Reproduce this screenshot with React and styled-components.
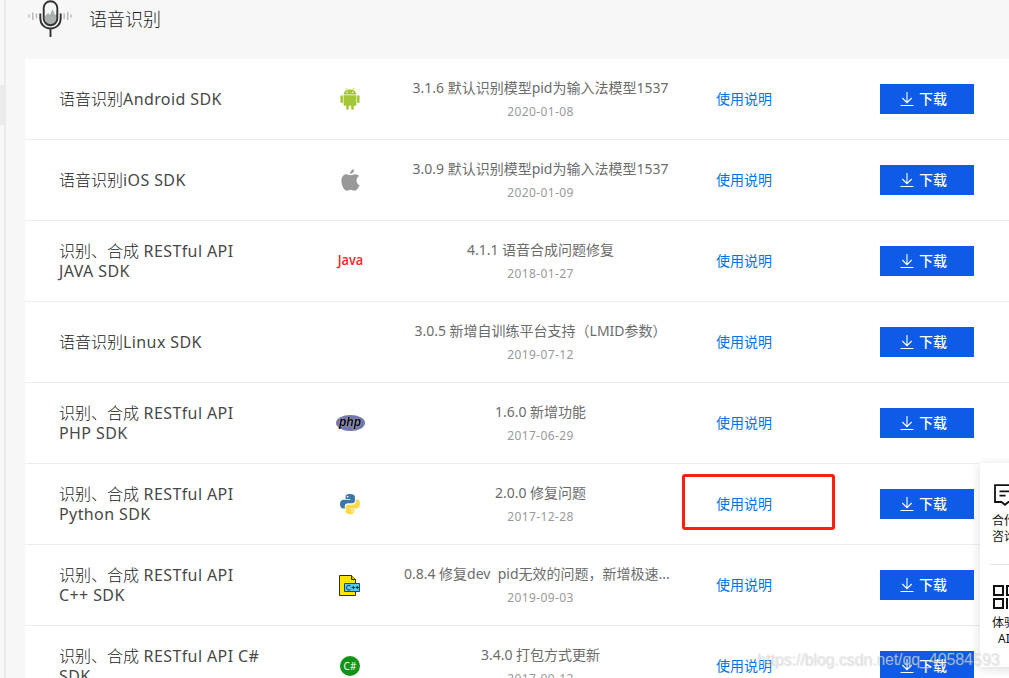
import styled, { createGlobalStyle } from 'styled-components';

const rows = [
  { prefix: '语音识别', name: 'Android SDK', icon: 'android', info: '3.1.6 默认识别模型pid为输入法模型1537', date: '2020-01-08' },
  { prefix: '语音识别', name: 'iOS SDK', icon: 'apple', info: '3.0.9 默认识别模型pid为输入法模型1537', date: '2020-01-09' },
  { prefix: '识别、合成', name: ' RESTful API JAVA SDK', icon: 'java', info: '4.1.1 语音合成问题修复', date: '2018-01-27' },
  { prefix: '语音识别', name: 'Linux SDK', info: '3.0.5 新增自训练平台支持（LMID参数）', date: '2019-07-12' },
  { prefix: '识别、合成', name: ' RESTful API PHP SDK', icon: 'php', info: '1.6.0 新增功能', date: '2017-06-29' },
  { prefix: '识别、合成', name: ' RESTful API Python SDK', icon: 'python', info: '2.0.0 修复问题', date: '2017-12-28', marked: true },
  { prefix: '识别、合成', name: ' RESTful API C++ SDK', icon: 'cpp', info: '0.8.4 修复dev\u00a0\u00a0pid无效的问题，新增极速...\u00a0\u00a0', date: '2019-09-03' },
  { prefix: '识别、合成', name: ' RESTful API C# SDK', icon: 'csharp', info: '3.4.0 打包方式更新', date: '2017-09-12' },
];

const AndroidIcon = () => (
  <svg width="20" height="22" viewBox="0 0 20 22" fill="#a4c639">
    <path d="M3.6 6.6C3.7 4.4 5 3 6.9 2.1L5.8.4l.5-.3 1.2 1.8c1.6-.5 3.4-.5 5 0L13.7.1l.5.3-1.1 1.7c1.9.9 3.2 2.3 3.3 4.5z" />
    <circle cx="7.2" cy="4.3" r=".7" fill="#fff" />
    <circle cx="12.8" cy="4.3" r=".7" fill="#fff" />
    <path d="M3.6 7.3h12.8v9.2c0 .8-.6 1.3-1.3 1.3h-1.3v2.7c0 1.9-2.6 1.9-2.6 0v-2.7H8.8v2.7c0 1.9-2.6 1.9-2.6 0v-2.7H4.9c-.7 0-1.3-.5-1.3-1.3z" />
    <rect x=".4" y="7.2" width="2.6" height="7.8" rx="1.3" />
    <rect x="17" y="7.2" width="2.6" height="7.8" rx="1.3" />
  </svg>
);

const AppleIcon = () => (
  <svg width="19" height="22" viewBox="0 0 19 22" fill="#999">
    <path d="M15.5 11.6c0-2.3 1.1-3.5 2.6-4.5-1-1.4-2.5-1.9-4.2-1.9-1.8 0-2.8 1-4.2 1-1.3 0-2.5-1-4.2-1C2.6 5.2.4 7.7.4 12c0 4.4 2.8 9.7 5.3 9.7 1.4 0 2.3-1 4.1-1 1.8 0 2.4 1 4 1 2 0 3.8-3 4.7-5.4-2-.9-3-2.5-3-4.7zM13.1.2c.3 2.4-1.6 4.7-4 4.7C8.9 2.6 10.7.5 13.1.2z" />
  </svg>
);

const PythonIcon = () => (
  <svg width="22" height="22" viewBox="0 0 22 22">
    <path fill="#3b77a8" d="M10.9 1C7 1 6.6 2.7 6.6 3.7v2.2h4.7v.8H4.5C2.4 6.7 1 8.3 1 11.1c0 2.9 1.3 4.5 3.1 4.5h1.7v-2.4c0-1.7 1.4-3 3.1-3h4.5c1.4 0 2.5-1.1 2.5-2.5v-4C15.9 1.8 13.9 1 10.9 1z" />
    <path fill="#ffd84a" d="M11.1 21.2c3.9 0 4.3-1.7 4.3-2.7v-2.2h-4.7v-.8h6.8c2.1 0 3.5-1.6 3.5-4.4 0-2.9-1.3-4.5-3.1-4.5h-1.2v2.2c0 1.7-1.4 3-3.1 3H9.1c-1.4 0-2.5 1.1-2.5 2.5v4.2c0 1.9 1.5 2.7 4.5 2.7z" />
    <circle cx="8.6" cy="3.6" r=".9" fill="#fff" />
    <circle cx="13.4" cy="18.6" r=".9" fill="#fff" />
  </svg>
);

const CppIcon = () => (
  <svg width="22" height="24" viewBox="0 -2 22 24">
    <path d="M.5.5h12l4 4v16H.5z" fill="#ffe500" stroke="#332e12" />
    <path d="M12.5.5v4h4" fill="#d8c200" stroke="#332e12" />
    <path d="M5.5 8.500h15v8h-15z" fill="#5cc8f4" stroke="#1d4a66" />
    <path d="M11.5 10.900c-2-1.300-4-.3-4 1.800s2 3.100 4 1.800M12.500 12.500h3.500M14.300 10.800V14.300M16.500 12.500h3.500M18.300 10.800V14.300" fill="none" stroke="#14384d" />
  </svg>
);

const MicIcon = () => (
  <svg width="46" height="40" viewBox="0 0 46 40" fill="none">
    <path d="M17 16l3-3 2 2 2.500-6 2.500 6 2-1v7c0 5.500-12 5.500-12 0z" fill="#aab0b2" />
    <rect x="15.700" y="1.200" width="13.600" height="24" rx="6.800" stroke="#333" strokeWidth="1.900" />
    <path d="M12.300 13.500V18c0 6.500 4.300 10.500 10.200 10.500S32.700 24.500 32.700 18v-4.500M22.500 28.500V37" stroke="#333" strokeWidth="1.900" />
    <path d="M1 14.500v3M4.700 12.500v7.500M8.500 13.500v5M36.200 13.500v5.500M39.700 12V20M43 14.500v3" stroke="#b4b9ba" strokeWidth="1.400" />
  </svg>
);

const DownloadIcon = () => (
  <svg width="14" height="16" viewBox="0 0 14 16" fill="none" stroke="#fff" strokeWidth="1.1">
    <path d="M7 1v10.500M2.300 7L7 11.700 11.700 7M.5 14.500h13" />
  </svg>
);

const ChatIcon = () => (
  <svg width="22" height="22" viewBox="0 0 22 22" fill="none" stroke="#111" strokeWidth="1.8">
    <path d="M1 1.200h20V18h-6.500L11 20.800 7.500 18H1zM5.500 7.300h11M5.500 11.700h6" />
  </svg>
);

const CodeIcon = () => (
  <svg width="24" height="24" viewBox="0 0 24 24" fill="none" stroke="#111" strokeWidth="2">
    <path d="M1 1h9v9H1zM14 1h9v9h-9zM1 14h9v9H1zM14 13v11M18 14h5v5M18 23h5" />
  </svg>
);

const platformIcons = {
  android: <AndroidIcon />,
  apple: <AppleIcon />,
  python: <PythonIcon />,
  cpp: <CppIcon />,
};

const PlatformIcon = ({ type }) => {
  if (type === 'java') return <JavaMark>Java</JavaMark>;
  if (type === 'php') return <PhpMark>php</PhpMark>;
  if (type === 'csharp') return <CsharpMark>C#</CsharpMark>;
  return platformIcons[type] || null;
};

const App = () => {
  return (
    <>
      <GlobalStyle />
      <Page>
        <SideEdge>
          <SideActive />
        </SideEdge>
        <Main>
          <Header>
            <MicIcon />
            <Title>语音识别</Title>
          </Header>
          <List>
            {rows.map(({ prefix, name, icon, info, date, marked }) => (
              <Row key={name}>
                <Name>
                  {prefix}
                  <span>{name}</span>
                </Name>
                <IconCell>
                  <PlatformIcon type={icon} />
                </IconCell>
                <Details>
                  <Info>{info}</Info>
                  <ReleaseDate>{date}</ReleaseDate>
                </Details>
                <LinkCell>
                  <DocLink href="#">使用说明</DocLink>
                  {marked && <Marker />}
                </LinkCell>
                <DownloadButton type="button">
                  <DownloadIcon />
                  下载
                </DownloadButton>
              </Row>
            ))}
          </List>
        </Main>
        <FloatPanel>
          <FloatItem>
            <ChatIcon />
            <FloatText $top={7}>
              合作
              <br />
              咨询
            </FloatText>
          </FloatItem>
          <FloatDivider />
          <FloatItem>
            <CodeIcon />
            <FloatText $top={6}>
              体验
              <br />
              AI
            </FloatText>
          </FloatItem>
        </FloatPanel>
        <Watermark>https://blog.csdn.net/qq_40584593</Watermark>
      </Page>
    </>
  );
};

const GlobalStyle = createGlobalStyle`
  * {
    box-sizing: border-box;
  }

  body {
    margin: 0;
    overflow: hidden;
    font-family: 'Noto Sans', 'Noto Sans CJK SC', sans-serif;
  }
`;

const Page = styled.div`
  position: relative;
  display: flex;
  width: 1009px;
  height: 678px;
  overflow: hidden;
  background: #f7f7f7;
`;

const SideEdge = styled.div`
  flex: none;
  width: 6px;
  padding-top: 85px;
  border-right: 2px solid #ebebeb;
`;

const SideActive = styled.div`
  height: 40px;
  background: #ebebeb;
`;

const Main = styled.main`
  flex: 1;
  padding-left: 19px;
`;

const Header = styled.header`
  display: flex;
  height: 59px;
  padding-left: 3px;
`;

const Title = styled.h1`
  margin: 0 0 0 15px;
  color: #222;
  font-size: 18px;
  font-weight: 300;
  line-height: 38px;
`;

const List = styled.div`
  background: #fff;
`;

const Row = styled.div`
  display: grid;
  grid-template-columns: 241px 100px 281px 126px 94px;
  align-items: center;
  height: 81px;
  padding-left: 34px;
  border-bottom: 1px solid #ededed;
`;

const Name = styled.div`
  width: 203px;
  color: #222;
  font-size: 16px;
  font-weight: 300;
  line-height: 20px;

  span {
    color: #484848;
    font-weight: 400;
    letter-spacing: 0.4px;
  }
`;

const IconCell = styled.div`
  display: flex;
  justify-content: center;
`;

const JavaMark = styled.span`
  margin-top: -2px;
  color: #f52222;
  font-family: 'Open Sans', sans-serif;
  font-size: 14.5px;
  font-weight: 600;
  line-height: 20px;
  transform: scaleX(0.88);
`;

const PhpMark = styled.span`
  width: 29px;
  height: 16px;
  border-radius: 50%;
  background: #7377ad;
  color: #000;
  font: italic bold 12px/14px 'Liberation Sans', sans-serif;
  text-align: center;
  text-shadow: 0 0 1px #fff;
`;

const CsharpMark = styled.span`
  width: 20px;
  height: 20px;
  border-radius: 50%;
  background: #0f9415;
  color: #fff;
  font-size: 10px;
  font-weight: 400;
  line-height: 20px;
  text-align: center;
`;

const Details = styled.div`
  text-align: center;
`;

const Info = styled.div`
  color: #6c6c6c;
  font-size: 14px;
  font-weight: 400;
  line-height: 24px;
  white-space: nowrap;
`;

const ReleaseDate = styled.div`
  margin-bottom: -1px;
  padding-top: 1px;
  color: #999;
  font-size: 12px;
  font-weight: 400;
  line-height: 22px;
  letter-spacing: 0.4px;
`;

const LinkCell = styled.div`
  position: relative;
  padding-bottom: 2px;
  text-align: center;
`;

const DocLink = styled.a`
  color: #0073eb;
  font-size: 14px;
  font-weight: 400;
  text-decoration: none;
`;

const Marker = styled.span`
  position: absolute;
  top: 50%;
  left: 1px;
  width: 153px;
  height: 56px;
  margin-top: -30px;
  border: 3px solid #ff1f10;
  border-radius: 3px;
`;

const DownloadButton = styled.button`
  display: flex;
  align-items: center;
  justify-content: center;
  gap: 5px;
  width: 94px;
  height: 30px;
  margin-left: 73px;
  padding: 0 7px 2px 0;
  border: 0;
  background: #0d5be6;
  color: #fff;
  font-family: inherit;
  font-size: 14px;
  font-weight: 500;

  svg {
    position: relative;
    top: 1px;
  }
`;

const FloatPanel = styled.aside`
  position: absolute;
  top: 463px;
  left: 980px;
  width: 50px;
  height: 204px;
  padding-top: 21px;
  background: #fff;
  box-shadow: 0 2px 10px rgba(0, 0, 0, 0.14);
`;

const FloatItem = styled.div`
  display: flex;
  flex-direction: column;
  align-items: center;
`;

const FloatText = styled.div`
  margin-top: ${({ $top }) => $top}px;
  padding-right: 2px;
  color: #111;
  font-size: 12px;
  font-weight: 400;
  line-height: 16px;
  text-align: center;
`;

const FloatDivider = styled.div`
  height: 1px;
  margin: 19px 10px 20px;
  background: #e6e6e6;
`;

const Watermark = styled.div`
  position: absolute;
  top: 650px;
  left: 757px;
  color: rgba(225, 225, 225, 0.7);
  font-family: 'Liberation Sans', sans-serif;
  font-size: 16px;
  font-weight: 400;
  line-height: 19px;
  letter-spacing: -0.1px;
  text-shadow: 1px 1px 1px rgba(120, 120, 120, 0.22);
  white-space: nowrap;
`;

export default App;
